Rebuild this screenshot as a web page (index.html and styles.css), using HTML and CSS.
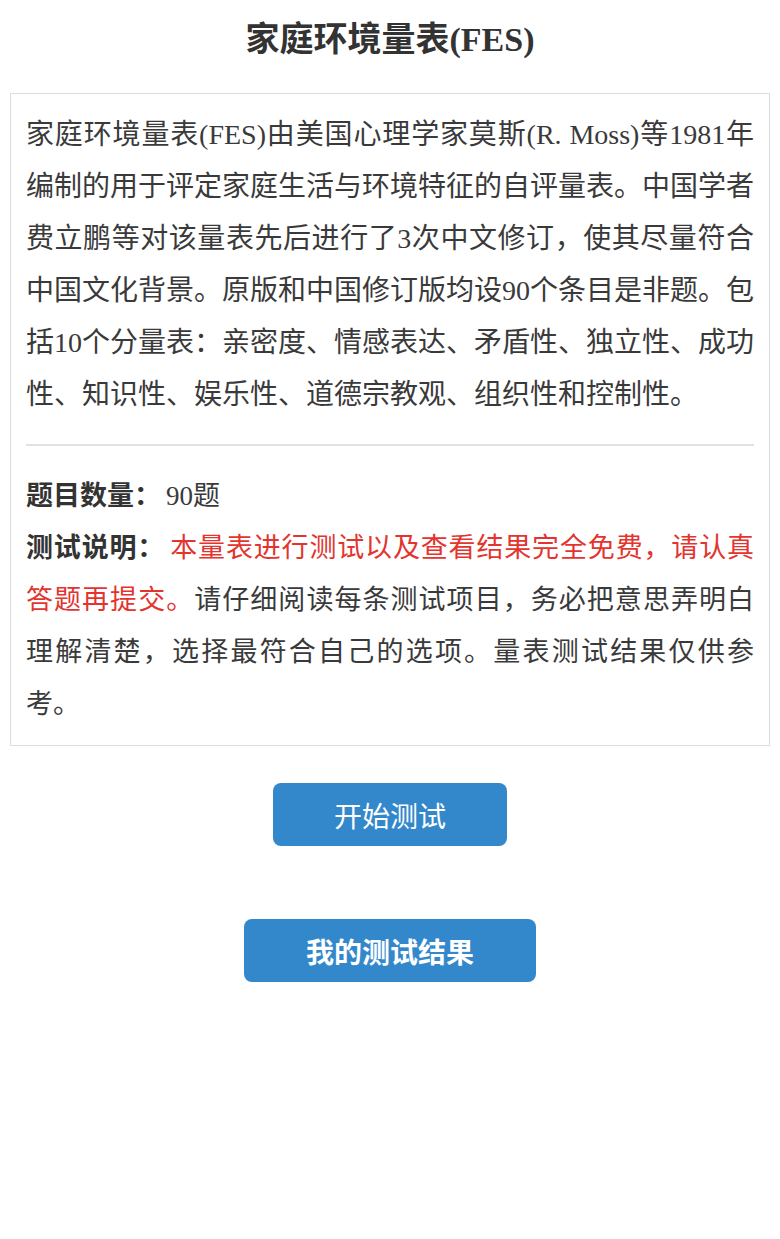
FILE: index.html
```html
<!DOCTYPE html>
<html lang="zh-CN">
<head>
    <meta charset="UTF-8">
    <meta name="viewport" content="width=device-width, initial-scale=1.0">
    <title>家庭环境量表(FES)</title>
    <link rel="stylesheet" href="styles.css">
</head>
<body>
    <h1 class="page-title">家庭环境量表(FES)</h1>

    <div class="intro-box">
        <p class="intro-text">家庭环境量表(FES)由美国心理学家莫斯(R. Moss)等1981年编制的用于评定家庭生活与环境特征的自评量表。中国学者费立鹏等对该量表先后进行了3次中文修订，使其尽量符合中国文化背景。原版和中国修订版均设90个条目是非题。包括10个分量表：亲密度、情感表达、矛盾性、独立性、成功性、知识性、娱乐性、道德宗教观、组织性和控制性。</p>
        <hr class="divider">
        <p class="info-line"><strong>题目数量：</strong>90题</p>
        <p class="info-line"><strong>测试说明：</strong><span class="notice">本量表进行测试以及查看结果完全免费，请认真答题再提交。</span>请仔细阅读每条测试项目，务必把意思弄明白理解清楚，选择最符合自己的选项。量表测试结果仅供参考。</p>
    </div>

    <div class="actions">
        <button class="btn" id="start-btn">开始测试</button>
        <button class="btn btn-bold" id="result-btn">我的测试结果</button>
    </div>
</body>
</html>
```

FILE: styles.css
```css
body {
    margin: 0;
    padding: 0 10px;
    background: #fff;
    color: #3a3a3a;
    font-family: "Liberation Serif", "Noto Sans CJK SC", serif;
}
.page-title {
    margin: 0;
    height: 84px;
    line-height: 80px;
    font-size: 34px;
    font-weight: bold;
    text-align: center;
    color: #333;
}
.intro-box {
    margin-top: 9px;
    border: 1px solid #dcdcdc;
    padding: 15px 15px 15px;
}
.intro-text {
    margin: 0;
    font-size: 28px;
    line-height: 52px;
    text-align: justify;
}
.divider {
    border: none;
    border-top: 2px solid #e2e2e2;
    margin: 23px 0 24px;
}
.info-line {
    margin: 0;
    font-size: 27px;
    line-height: 52px;
    text-align: justify;
}
.info-line strong {
    font-family: "Noto Sans CJK SC", sans-serif;
    font-weight: bold;
    line-height: 1;
    margin-right: 5px; /* keep the full-width colon gap */
    color: #333;
}
.notice {
    color: #e3342f;
}
.actions {
    display: flex;
    flex-direction: column;
    align-items: center;
    gap: 73px;
    margin-top: 37px;
}
.btn {
    height: 63px;
    padding: 0 61px;
    border: none;
    border-radius: 8px;
    background-color: #3388cc;
    color: #fff;
    font-family: "Noto Sans CJK SC", sans-serif;
    font-size: 28px;
    cursor: pointer;
}
.btn-bold {
    font-weight: bold;
    padding: 0 62px;
}
```
